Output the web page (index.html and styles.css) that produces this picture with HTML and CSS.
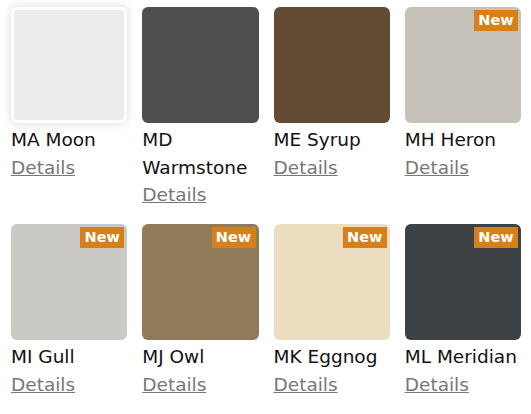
FILE: index.html
```html
<!doctype html>
<html lang="en">
<head>
<meta charset="UTF-8" />
<title>Colours</title>
<link rel="stylesheet" href="styles.css">
</head>
<body>

<ul class="colours">
	<li class="colour">
		<span class="swatch swatch-moon selected"></span>
		<span class="name">MA Moon</span>
		<a class="details" href="#">Details</a>
	</li>
	<li class="colour">
		<span class="swatch swatch-warmstone"></span>
		<span class="name">MD Warmstone</span>
		<a class="details" href="#">Details</a>
	</li>
	<li class="colour">
		<span class="swatch swatch-syrup"></span>
		<span class="name">ME Syrup</span>
		<a class="details" href="#">Details</a>
	</li>
	<li class="colour">
		<span class="swatch swatch-heron"><em class="new">New</em></span>
		<span class="name">MH Heron</span>
		<a class="details" href="#">Details</a>
	</li>
	<li class="colour">
		<span class="swatch swatch-gull"><em class="new">New</em></span>
		<span class="name">MI Gull</span>
		<a class="details" href="#">Details</a>
	</li>
	<li class="colour">
		<span class="swatch swatch-owl"><em class="new">New</em></span>
		<span class="name">MJ Owl</span>
		<a class="details" href="#">Details</a>
	</li>
	<li class="colour">
		<span class="swatch swatch-eggnog"><em class="new">New</em></span>
		<span class="name">MK Eggnog</span>
		<a class="details" href="#">Details</a>
	</li>
	<li class="colour">
		<span class="swatch swatch-meridian"><em class="new">New</em></span>
		<span class="name">ML Meridian</span>
		<a class="details" href="#">Details</a>
	</li>
</ul>

</body>
</html>
```

FILE: styles.css
```css
html,body,ul{margin:0;padding:0;}
li{list-style:none;}
body{
	background:#fff;
	font-family:"DejaVu Sans","Liberation Sans",sans-serif;
	color:#111;
}

.colours{
	display:grid;
	grid-template-columns:repeat(4,1fr);
	column-gap:15px;
	row-gap:15px;
	padding:7px 10px 0 11px;
}

.colour{
	display:flex;
	flex-direction:column;
	align-items:flex-start;
}

.swatch{
	position:relative;
	display:block;
	width:100%;
	aspect-ratio:1/1;
	border-radius:6px;
	box-sizing:border-box;
	margin-bottom:3px;
}

.swatch.selected{
	border:3px solid #fff;
	box-shadow:0 0 10px rgba(0,0,0,.16);
}

.swatch-moon{background:#ececec;}
.swatch-warmstone{background:#4f4f4d;}
.swatch-syrup{background:#634a35;}
.swatch-heron{background:#c5c0b8;}
.swatch-gull{background:#cbc9c5;}
.swatch-owl{background:#917a58;}
.swatch-eggnog{background:#ecdcc0;}
.swatch-meridian{background:#3e4245;}

/* badge over the swatch */
.new{
	position:absolute;
	top:3px;
	right:3px;
	width:44px;
	height:21px;
	line-height:21px;
	text-align:center;
	background:#d97f17;
	color:#fff;
	font-style:normal;
	font-weight:bold;
	font-size:14.5px;
}

.name{
	font-size:18.5px;
	line-height:27.5px;
}

.details{
	font-size:18.5px;
	line-height:27.5px;
	color:#777;
	text-decoration:underline;
}
```
